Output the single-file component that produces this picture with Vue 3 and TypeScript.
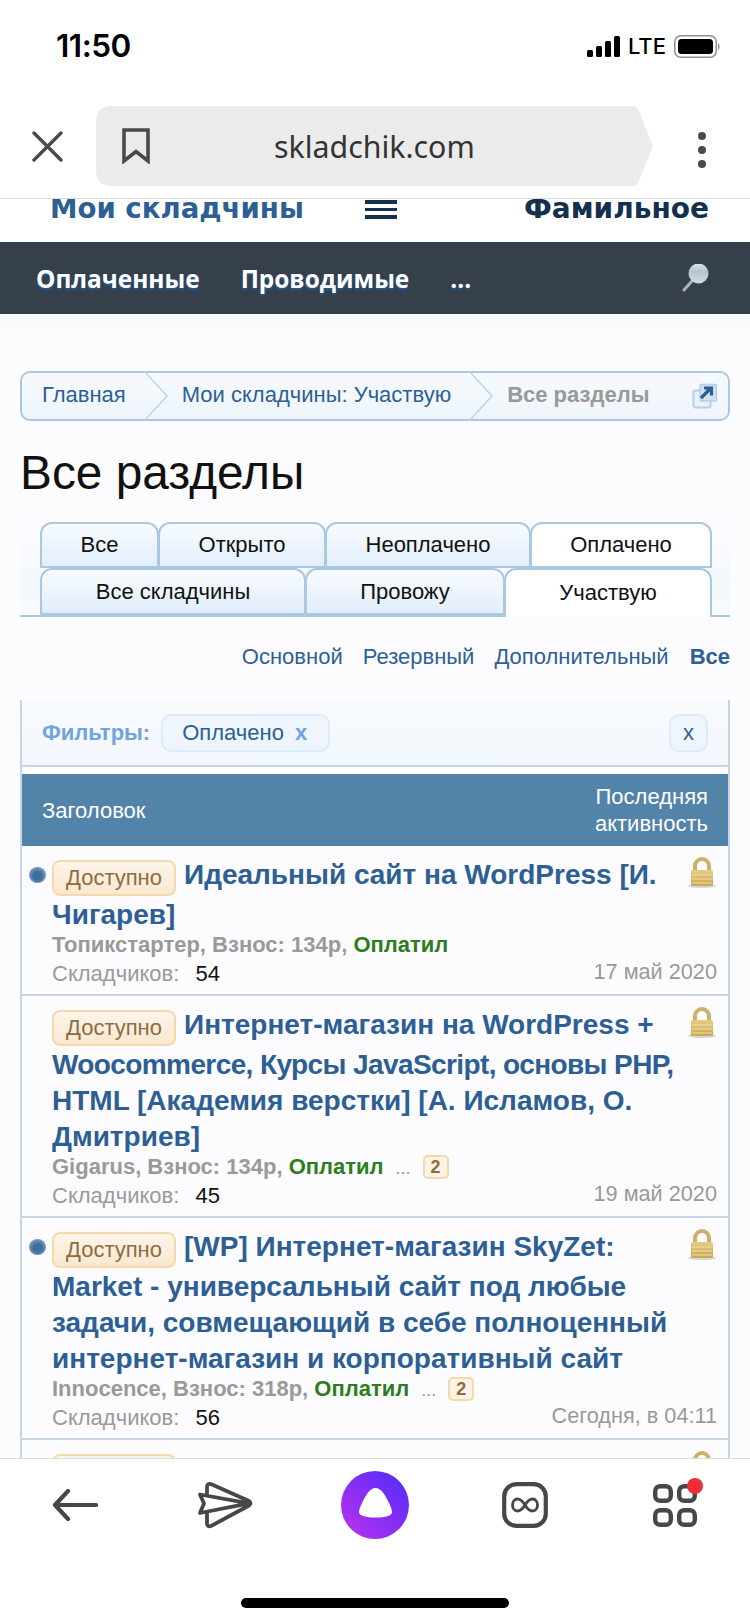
<script setup lang="ts">
interface Row {
  dot: boolean
  title: string
  tight?: string
  tail?: string
  author: string
  fee: string
  pages: string
  count: string
  date: string
}
const rows: Row[] = [
  { dot: true, title: 'Идеальный сайт на WordPress [И. Чигарев]', author: 'Топикстартер', fee: '134р', pages: '', count: '54', date: '17 май 2020' },
  { dot: false, title: 'Интернет-магазин на WordPress + ', tight: 'Woocommerce, Курсы JavaScript, основы PHP,', tail: ' HTML [Академия верстки] [А. Исламов, О. Дмитриев]', author: 'Gigarus', fee: '134р', pages: '2', count: '45', date: '19 май 2020' },
  { dot: true, title: '[WP] Интернет-магазин SkyZet: Market - универсальный сайт под любые задачи, совмещающий в себе полноценный интернет-магазин и корпоративный сайт', author: 'Innocence', fee: '318р', pages: '2', count: '56', date: 'Сегодня, в 04:11' },
]
const tabs1 = [
  { t: 'Все', w: 119 }, { t: 'Открыто', w: 168 }, { t: 'Неоплачено', w: 206 }, { t: 'Оплачено', w: 182 },
]
const tabs2 = [
  { t: 'Все складчины', w: 266 }, { t: 'Провожу', w: 200 }, { t: 'Участвую', w: 208 },
]
</script>

<template>
  <div class="phone">
    <div class="status">
      <span class="time">11:50</span>
      <div class="status-right">
        <svg width="33" height="21" viewBox="0 0 33 21"><rect x="0" y="14" width="6" height="7" rx="1.5"/><rect x="9" y="10" width="6" height="11" rx="1.5"/><rect x="18" y="5" width="6" height="16" rx="1.5"/><rect x="27" y="0" width="6" height="21" rx="1.5"/></svg>
        <span class="lte">LTE</span>
        <svg width="47" height="23" viewBox="0 0 47 23"><rect x="0.75" y="0.75" width="41.5" height="21.5" rx="6" fill="none" stroke="#8e8e8e" stroke-width="1.5"/><rect x="4" y="4" width="35" height="15" rx="3.5"/><path d="M44 8 C46 9 46 14 44 15Z" fill="#8e8e8e"/></svg>
      </div>
    </div>

    <div class="browser">
      <svg class="close" width="31" height="31" viewBox="0 0 31 31"><path d="M2 2 L29 29 M29 2 L2 29" stroke="#4a4a4a" stroke-width="3.4" stroke-linecap="round"/></svg>
      <div class="url">
        <svg class="bookmark" width="28" height="36" viewBox="0 0 28 36"><path d="M2 2 H26 V33 L14 23.5 L2 33Z" fill="none" stroke="#4a4a4a" stroke-width="3.6"/></svg>
        <span class="domain">skladchik.com</span>
      </div>
      <div class="dots"><i></i><i></i><i></i></div>
    </div>

    <div class="page">
      <div class="site-head">
        <span class="site-a">Мои складчины</span>
        <span class="burger"><i></i><i></i><i></i></span>
        <span class="site-b">Фамильное</span>
      </div>
      <div class="nav">
        <span>Оплаченные</span>
        <span>Проводимые</span>
        <span>...</span>
        <svg class="search" width="28" height="28" viewBox="0 0 28 28">
          <defs><linearGradient id="lens" x1="0" y1="0" x2="0" y2="1"><stop offset="0" stop-color="#dfe6ec"/><stop offset="0.4" stop-color="#b4c3d3"/><stop offset="1" stop-color="#cfdae5"/></linearGradient></defs>
          <path d="M10 17 L2 26" stroke="#aeb2b5" stroke-width="3" stroke-linecap="round"/>
          <circle cx="16.5" cy="9.5" r="10" fill="url(#lens)"/>
        </svg>
      </div>

      <div class="content">
        <div class="crumbs">
          <span class="crumb first">Главная</span>
          <svg class="chev" width="24" height="50" viewBox="0 0 24 50"><path d="M0 0 L23 25 L0 50" fill="none" stroke="#bcd4e8" stroke-width="1.5"/></svg>
          <span class="crumb mid">Мои складчины: Участвую</span>
          <svg class="chev" width="24" height="50" viewBox="0 0 24 50"><path d="M0 0 L23 25 L0 50" fill="none" stroke="#bcd4e8" stroke-width="1.5"/></svg>
          <span class="crumb last">Все разделы</span>
          <svg class="ext" width="26" height="26" viewBox="0 0 26 26">
            <rect x="1.5" y="7.5" width="17" height="17" rx="2" fill="#eaf2fa" stroke="#b4cfe6" stroke-width="2"/>
            <rect x="8" y="1.5" width="16.5" height="16.5" rx="1.5" fill="#cfe0f0" stroke="#b4cfe6" stroke-width="1.5"/>
            <path d="M9 15 L18 6 M12 5 H19.5 V12.5" fill="none" stroke="#2b5d8f" stroke-width="3.2"/>
          </svg>
        </div>

        <h1 class="title">Все разделы</h1>

        <div class="tabs">
          <div class="tab-row">
            <span v-for="(t, i) in tabs1" :key="t.t" class="tab" :class="{ on: i === 3 }" :style="{ width: t.w + 'px' }">{{ t.t }}</span>
          </div>
          <div class="tab-row">
            <span v-for="(t, i) in tabs2" :key="t.t" class="tab" :class="{ on: i === 2 }" :style="{ width: t.w + 'px' }">{{ t.t }}</span>
          </div>
        </div>

        <div class="links">
          <span>Основной</span><span>Резервный</span><span>Дополнительный</span><b>Все</b>
        </div>

        <div class="panel">
          <div class="filters">
            <b class="f-label">Фильтры:</b>
            <span class="chip">Оплачено <b>x</b></span>
            <span class="chip-x">x</span>
          </div>
          <div class="thead">
            <span>Заголовок</span>
            <span class="thead-r">Последняя<br />активность</span>
          </div>
          <div v-for="r in rows" :key="r.count" class="row">
            <div class="row-top">
              <div class="dot-col"><i v-if="r.dot" class="dot"></i></div>
              <div class="main">
                <div class="row-title"><span class="badge">Доступно</span>{{ r.title }}<span v-if="r.tight" class="tight">{{ r.tight }}</span>{{ r.tail }}</div>
                <div class="meta">
                  {{ r.author }}, Взнос: {{ r.fee }}, <span class="paid">Оплатил</span>
                  <template v-if="r.pages"><span class="more">...</span><span class="pg">{{ r.pages }}</span></template>
                </div>
              </div>
              <svg class="lock" width="30" height="31" viewBox="0 0 30 31">
                <defs>
                  <linearGradient id="lockG" x1="0" y1="0" x2="0" y2="1"><stop offset="0" stop-color="#e6cd84"/><stop offset="1" stop-color="#c9a653"/></linearGradient>
                </defs>
                <ellipse cx="15" cy="29" rx="14" ry="2" fill="#d8d8d8"/>
                <path d="M8 14 V9 a7 7 0 0 1 14 0 V14" fill="none" stroke="#cdb06a" stroke-width="4"/>
                <rect x="4" y="13" width="22" height="16" rx="1.5" fill="url(#lockG)"/>
                <path d="M5 18 H25 M5 22 H25 M5 26 H25" stroke="#eedfa8" stroke-width="1.2"/>
              </svg>
            </div>
            <div class="row-foot">
              <span class="cnt">Складчиков: <em>{{ r.count }}</em></span>
              <span class="date">{{ r.date }}</span>
            </div>
          </div>
          <div class="row">
            <div class="row-top">
              <div class="dot-col"></div>
              <div class="main"><div class="row-title"><span class="badge">Доступно</span></div></div>
              <svg class="lock" width="30" height="31" viewBox="0 0 30 31">
                <path d="M8 14 V9 a7 7 0 0 1 14 0 V14" fill="none" stroke="#cdb06a" stroke-width="4"/>
                <rect x="4" y="13" width="22" height="16" rx="1.5" fill="#d8bb6b"/>
              </svg>
            </div>
          </div>
        </div>
      </div>
    </div>

    <div class="bottom">
      <div class="tools">
        <svg width="46" height="32" viewBox="0 0 46 32"><path d="M44 16 H4 M16 2 L3 16 L16 30" fill="none" stroke="#47474b" stroke-width="4.2" stroke-linecap="round" stroke-linejoin="round"/></svg>
        <svg width="56" height="48" viewBox="0 0 56 48"><path d="M10 15 V6 Q10 1.5 15 3.5 L52 20 Q55 22.3 52 24.5 L15 44.5 Q10 47 10 42 V32 M3 13.5 L52 22.3 L3 32 L7 22.5 Z" fill="none" stroke="#47474b" stroke-width="3.8" stroke-linejoin="round"/></svg>
        <svg width="68" height="68" viewBox="0 0 68 68">
          <defs><linearGradient id="alice" x1="0.9" y1="0.1" x2="0.1" y2="0.9"><stop offset="0" stop-color="#5a2bfa"/><stop offset="1" stop-color="#b232ee"/></linearGradient></defs>
          <circle cx="34" cy="34" r="34" fill="url(#alice)"/>
          <path d="M34.5 17 C40 17 44 24 47 30 C49 34 51 38 51 41 C51 45 44 46.5 34.5 46.5 C25 46.5 18 45 18 41 C18 38 20 34 22 30 C25 24 29 17 34.5 17Z" fill="#fff"/>
        </svg>
        <svg width="46" height="46" viewBox="0 0 46 46"><rect x="2.2" y="2.2" width="41.6" height="41.6" rx="12" fill="none" stroke="#47474b" stroke-width="4.2"/><path d="M23 23 C20.5 19 18 17 15.5 17 C12.5 17 10.5 19.8 10.5 23 C10.5 26.2 12.5 29 15.5 29 C18 29 20.5 27 23 23 C25.5 19 28 17 30.5 17 C33.5 17 35.5 19.8 35.5 23 C35.5 26.2 33.5 29 30.5 29 C28 29 25.5 27 23 23Z" fill="none" stroke="#47474b" stroke-width="2.8"/></svg>
        <svg width="56" height="54" viewBox="0 0 56 54">
          <g fill="none" stroke="#47474b" stroke-width="4.4"><rect x="8.2" y="8.2" width="15.6" height="14.6" rx="5"/><rect x="32.2" y="8.2" width="15.6" height="14.6" rx="5"/><rect x="8.2" y="32.2" width="15.6" height="14.6" rx="5"/><rect x="32.2" y="32.2" width="15.6" height="14.6" rx="5"/></g>
          <circle cx="48" cy="8" r="8" fill="#ee2d35"/>
        </svg>
      </div>
      <div class="home"></div>
    </div>
  </div>
</template>

<style scoped>
.phone { width: 750px; height: 1624px; display: flex; flex-direction: column; overflow: hidden; background: #fff; font-family: "Liberation Sans", Arial, sans-serif; }
.status { height: 106px; flex: none; display: flex; justify-content: space-between; align-items: flex-start; padding: 28px 29px 0 56px; box-sizing: border-box; }
.time { font-family: Inter, sans-serif; font-weight: 600; font-size: 31.5px; line-height: 36px; letter-spacing: -0.5px; color: #000; }
.status-right { display: flex; align-items: center; gap: 8px; height: 36px; }
.lte { font-family: Inter, sans-serif; font-weight: 500; font-size: 22px; color: #000; }
.browser { height: 93px; flex: none; display: flex; align-items: flex-start; padding-left: 32px; box-sizing: border-box; border-bottom: 1.5px solid #dedede; }
.close { margin: 25px 33px 0 0; }
.url { position: relative; width: 557px; height: 80px; background: #ebebeb; clip-path: path("M16 0 H536 Q541 0 543 5 L557 40 L543 75 Q541 80 536 80 H16 Q0 80 0 64 V16 Q0 0 16 0Z"); display: flex; align-items: center; }
.bookmark { margin-left: 26px; flex: none; }
.domain { position: absolute; left: 178px; top: 0; line-height: 82px; font-family: "Noto Sans", sans-serif; font-size: 30.3px; color: #333; }
.dots { margin-left: 45px; margin-top: 26px; display: flex; flex-direction: column; gap: 6px; }
.dots i { width: 8px; height: 8px; border-radius: 50%; background: #4a4a4a; }
.page { flex: 1; min-height: 0; overflow: hidden; background: #fcfcff; }
.site-head { height: 43px; background: #fff; display: flex; align-items: flex-start; padding: 0 41px 0 50px; box-sizing: border-box; overflow: hidden; font-family: "DejaVu Sans", sans-serif; font-weight: 700; font-size: 28px; line-height: 20px; }
.site-a { color: #2d5f94; width: 315px; flex: none; font-size: 27.6px; white-space: nowrap; }
.burger { width: 32px; flex: none; display: flex; flex-direction: column; gap: 4px; margin-top: 1px; }
.burger i { height: 3.5px; background: #14304f; }
.site-b { margin-left: auto; color: #14304f; }
.nav { height: 72px; background: #36404a; display: flex; align-items: center; padding: 0 40px 0 36px; box-sizing: border-box; gap: 41px; font-family: "Open Sans", sans-serif; font-weight: 700; font-size: 24.4px; color: #fff; text-shadow: 0 2px 2px #235a92; }
.search { margin-left: auto; }
.content { padding: 57px 20px 0; background: linear-gradient(#f9f9f9, #fcfcff 30px); }
.crumbs { height: 50px; box-sizing: border-box; border: 2px solid #a9c8e2; border-radius: 10px; background: linear-gradient(#f6fafd, #eef5fb); display: flex; align-items: center; font-size: 22px; line-height: 24px; padding-bottom: 2px; color: #2d5f94; }
.crumb { white-space: nowrap; }
.first { margin-left: 20px; margin-right: 18px; }
.mid { margin-right: 18px; }
.chev { flex: none; margin: -2px 14px -2px 0; position: relative; top: 1px; }
.last { font-weight: 700; color: #999; }
.ext { margin-left: auto; margin-right: 10px; position: relative; top: 1px; }
.title { margin: 23px 0 0; font-weight: 400; font-size: 47.8px; line-height: 58px; color: #111; }
.tabs { margin-top: 20px; padding: 0 19px 0 20px; border-bottom: 2px solid #a9c8e2; background: linear-gradient(#fcfcff, #f3f8fd 60px, #f7fafe); height: 95px; box-sizing: border-box; width: 710px; }
.tab-row { display: flex; height: 46px; }
.tab-row + .tab-row { height: 47px; }
.tab { box-sizing: border-box; height: 100%; border: 2px solid #a9c8e2; border-radius: 12px 12px 0 0; margin-right: -1px; background: linear-gradient(#f8fbfe, #e1eefb); font-size: 22px; color: #111; display: flex; align-items: center; justify-content: center; }
.tab.on { background: #fff; }
.tab-row + .tab-row .tab.on { height: 49px; border-bottom: 0; padding-bottom: 2px; position: relative; }
.links { display: flex; justify-content: flex-end; gap: 20px; margin-top: 27px; height: 26px; line-height: 26px; font-size: 22px; color: #2d5f94; }
.links b { margin-left: 1px; }
.panel { margin: 30px 0 0; width: 710px; border-left: 2px solid #c6d6e6; border-right: 2px solid #c6d6e6; box-sizing: border-box; }
.filters { height: 67px; box-sizing: border-box; padding: 14px 20px 0 20px; background: linear-gradient(#f8fbfe, #f2f7fc); border-bottom: 2px solid #c6d6e6; display: flex; font-size: 22px; }
.f-label { color: #6fa5dc; line-height: 38px; margin-right: 11px; }
.chip { height: 38px; box-sizing: border-box; padding: 0 21px 0 19px; border: 2px solid #dbebf9; border-radius: 10px; background: #eef5fc; color: #2d5f94; line-height: 34px; }
.chip b { color: #6fa5dc; margin-left: 5px; }
.chip-x { margin-left: auto; width: 39px; height: 38px; box-sizing: border-box; border: 2px solid #dbebf9; border-radius: 10px; background: #eef5fc; color: #2d5f94; text-align: center; line-height: 34px; }
.thead { margin-top: 7px; height: 72px; background: #5283a9; color: #fff; display: flex; justify-content: space-between; align-items: center; padding: 0 20px 0 20px; font-size: 22px; line-height: 27px; }
.thead-r { text-align: right; }
.row { background: #fcfcff; border-bottom: 2px solid #c6d6e6; padding: 11px 11px 6px 0; }
.row-top { display: flex; }
.dot-col { width: 30px; flex: none; padding-left: 7px; box-sizing: border-box; }
.dot { display: block; width: 17px; height: 16px; margin-top: 10px; border-radius: 50%; background: radial-gradient(circle at 50% 55%, #3f6f9f 35%, #a9c3dc 100%); }
.main { flex: 1; min-width: 0; }
.row-title { font-size: 28px; font-weight: 700; line-height: 36px; color: #2d5f94; }
.tight { white-space: nowrap; letter-spacing: -0.6px; }
.badge { display: inline-block; box-sizing: border-box; height: 36px; line-height: 32px; padding: 0 12px; margin-right: 8px; margin-bottom: 1px; border: 2px solid #f6d9ab; border-radius: 8px; background: linear-gradient(#fbf5ea, #fbe7cf); color: #8f6c3f; font-weight: 400; font-size: 22px; vertical-align: -1px; }
.meta { font-size: 22px; font-weight: 700; line-height: 24px; color: #999; height: 24px; white-space: nowrap; }
.paid { color: #2d7d1c; }
.more { margin: 0 12px 0 12px; font-weight: 400; font-size: 18px; }
.pg { display: inline-block; box-sizing: border-box; width: 26px; height: 24px; line-height: 20px; border: 2px solid #f6d9ab; border-radius: 5px; background: #fbf3e6; color: #8f6c3f; font-size: 18px; text-align: center; vertical-align: 1px; }
.lock { flex: none; }
.row-foot { display: flex; justify-content: space-between; align-items: flex-end; padding-left: 30px; margin-top: 3px; font-size: 22px; line-height: 28px; color: #999; }
.cnt em { font-style: normal; color: #111; margin-left: 10px; }
.date { position: relative; bottom: 2px; font-size: 21.7px; }
.bottom { height: 166px; flex: none; background: #fff; border-top: 1.5px solid #dedede; box-sizing: border-box; position: relative; z-index: 1; }
.tools { height: 92px; display: grid; grid-template-columns: repeat(5, 150px); justify-items: center; align-items: center; }
.home { width: 268px; height: 10px; border-radius: 5px; background: #000; margin: 47px auto 0; }
</style>
